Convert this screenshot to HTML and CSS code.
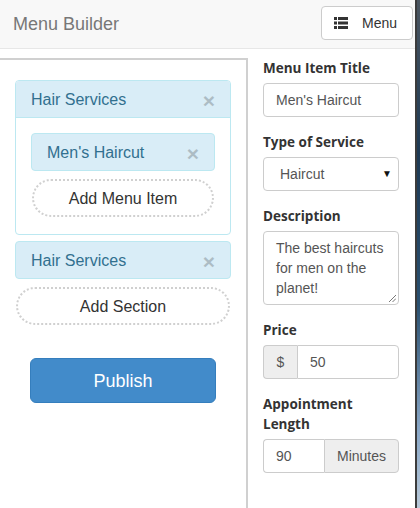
FILE: index.html
```html
<!DOCTYPE html>
<html>
<head>
<meta charset="utf-8">
<link rel="stylesheet" href="styles.css">
</head>
<body>
<div class="screen">
  <div class="app">
    <nav class="navbar">
      <span class="brand">Menu Builder</span>
      <button class="menu-btn" type="button">
        <svg class="list-icon" width="14" height="12" viewBox="0 0 14 12"><rect x="0" y="0" width="3" height="3"/><rect x="4" y="0" width="10" height="3"/><rect x="0" y="4.5" width="3" height="3"/><rect x="4" y="4.5" width="10" height="3"/><rect x="0" y="9" width="3" height="3"/><rect x="4" y="9" width="10" height="3"/></svg>
        <span>Menu</span>
      </button>
    </nav>
    <div class="main">
      <div class="builder">
        <div class="panel">
          <div class="panel-heading"><span>Hair Services</span><span class="close">×</span></div>
          <div class="panel-body">
            <div class="item"><span>Men's Haircut</span><span class="close">×</span></div>
            <div class="add add-item">Add Menu Item</div>
          </div>
        </div>
        <div class="panel-heading solo"><span>Hair Services</span><span class="close">×</span></div>
        <div class="add add-section">Add Section</div>
        <button class="publish" type="button">Publish</button>
      </div>
      <form class="editor">
        <div class="group">
          <label>Menu Item Title</label>
          <div class="control">Men's Haircut</div>
        </div>
        <div class="group">
          <label>Type of Service</label>
          <div class="control select"><span>Haircut</span><span class="caret">▼</span></div>
        </div>
        <div class="group">
          <label>Description</label>
          <div class="control textarea">The best haircuts for men on the planet!
            <svg class="grip" width="8" height="8" viewBox="0 0 8 8"><path d="M1 8 L8 1 M4.5 8 L8 4.5" stroke="#777" stroke-width="1"/></svg>
          </div>
        </div>
        <div class="group">
          <label>Price</label>
          <div class="input-group">
            <span class="addon dollar">$</span>
            <span class="control joined-right">50</span>
          </div>
        </div>
        <div class="group">
          <label>Appointment Length</label>
          <div class="input-group">
            <span class="control joined-left short">90</span>
            <span class="addon minutes">Minutes</span>
          </div>
        </div>
      </form>
    </div>
  </div>
  <div class="edge"></div>
</div>
</body>
</html>
```
FILE: styles.css
```css
* { box-sizing: border-box; }
html, body { margin: 0; padding: 0; }
body {
  font-family: "Liberation Sans", Arial, sans-serif;
  color: #333;
  font-size: 14px;
  background: #fff;
}
.screen { display: flex; width: 420px; height: 508px; overflow: hidden; }
.app { width: 415px; flex: none; display: flex; flex-direction: column; }
.edge {
  flex: 1;
  border-left: 2px solid #3c3c3c;
  background: linear-gradient(#4a5560 0%, #1e3a55 30%, #2a5070 60%, #8aa8c8 85%, #b8c8d8 100%);
}
.navbar {
  height: 49px;
  background: #f8f8f8;
  border-bottom: 1px solid #e7e7e7;
  display: flex;
  align-items: center;
  justify-content: space-between;
  padding: 0 2px 0 13px;
  flex: none;
}
.brand { font-size: 18px; color: #777; }
.menu-btn {
  width: 92px;
  height: 34px;
  border: 1px solid #ccc;
  border-radius: 4px;
  background: #fff;
  display: flex;
  align-items: center;
  padding: 0 0 0 12px;
  gap: 14px;
  font-family: inherit;
  font-size: 14px;
  color: #333;
  margin-top: -3px;
}
.list-icon { fill: #333; }
.main { display: flex; flex: 1; }
.builder {
  width: 248px;
  flex: none;
  margin-top: 9px;
  border-top: 2px solid #d0d0d0;
  border-right: 2px solid #d0d0d0;
  padding: 20px 15px 0 15px;
  display: flex;
  flex-direction: column;
}
.panel {
  border: 1px solid #bce8f1;
  border-radius: 4px;
  background: #fff;
}
.panel-heading {
  height: 37px;
  background: #d9edf7;
  color: #31708f;
  font-size: 16px;
  display: flex;
  align-items: center;
  justify-content: space-between;
  padding: 2px 15px 0 15px;
  border-bottom: 1px solid #bce8f1;
  border-radius: 3px 3px 0 0;
}
.panel-heading.solo {
  height: 38px;
  margin-top: 6px;
  border: 1px solid #bce8f1;
  border-radius: 4px;
}
.close {
  font-family: "Liberation Sans", sans-serif;
  font-size: 21px;
  font-weight: bold;
  color: #000;
  opacity: 0.2;
  line-height: 1;
  margin-top: 1px;
}
.panel-body { padding: 15px 15px 17px 15px; }
.item {
  height: 38px;
  background: #d9edf7;
  border: 1px solid #bce8f1;
  border-radius: 4px;
  color: #31708f;
  font-size: 16px;
  display: flex;
  align-items: center;
  justify-content: space-between;
  padding: 2px 15px 0 15px;
}
.add {
  height: 38px;
  border: 2px dotted #d0d0d0;
  border-radius: 20px;
  display: flex;
  align-items: center;
  justify-content: center;
  font-size: 16px;
  color: #333;
  padding-top: 2px;
}
.add-item { margin: 8px 1px 0 1px; }
.add-section { margin: 8px 1px 0 1px; }
.publish {
  margin: 33px auto 0 auto;
  width: 186px;
  height: 45px;
  border: 1px solid #357ebd;
  border-radius: 6px;
  background: #428bca;
  color: #fff;
  font-family: inherit;
  font-size: 18px;
  padding-top: 2px;
}
.editor {
  flex: 1;
  padding: 9px 16px 0 15px;
  margin: 0;
}
.group { margin-bottom: 15px; }
.group label {
  display: block;
  font-family: "Open Sans", "Liberation Sans", sans-serif;
  font-weight: bold;
  font-size: 13.5px;
  line-height: 20px;
  margin-bottom: 5px;
  color: #333;
}
.control {
  display: block;
  height: 34px;
  border: 1px solid #ccc;
  border-radius: 4px;
  padding: 6px 12px;
  line-height: 20px;
  color: #555;
  background: #fff;
  font-size: 14px;
}
.select {
  display: flex;
  justify-content: space-between;
  align-items: center;
  padding: 0 6px 0 16px;
}
.caret { font-size: 10px; color: #111; }
.textarea {
  height: 74px;
  position: relative;
  padding: 6px 12px;
  white-space: normal;
}
.grip { position: absolute; right: 2px; bottom: 2px; }
.input-group { display: flex; height: 34px; }
.addon {
  background: #eee;
  border: 1px solid #ccc;
  color: #555;
  display: flex;
  align-items: center;
  justify-content: center;
  font-size: 14px;
}
.dollar { width: 34px; border-radius: 4px 0 0 4px; border-right: 0; }
.joined-right { flex: 1; border-radius: 0 4px 4px 0; }
.joined-left { border-radius: 4px 0 0 4px; border-right: 0; }
.short { width: 61px; }
.minutes { flex: 1; border-radius: 0 4px 4px 0; }
```
